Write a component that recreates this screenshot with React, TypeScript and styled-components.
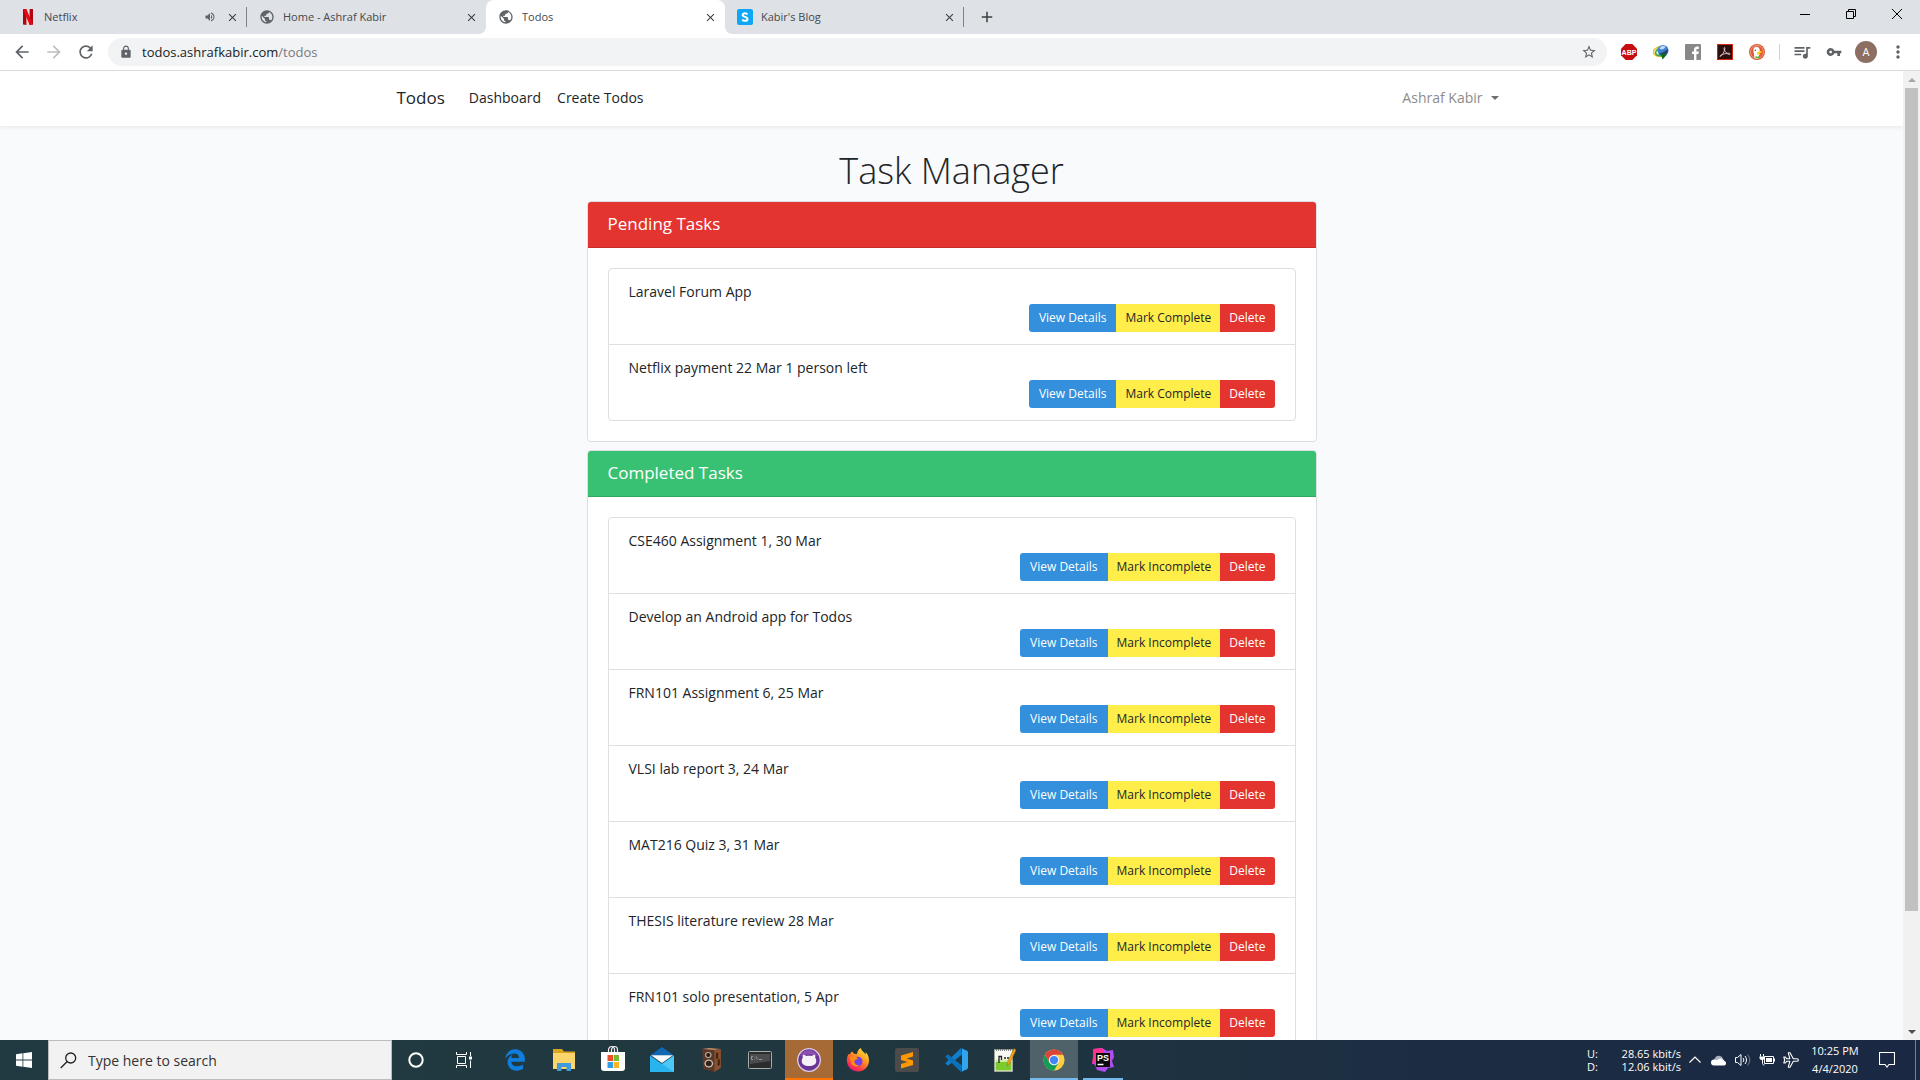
import React from "react";
import styled, { createGlobalStyle, css } from "styled-components";
import {
  MdArrowBack,
  MdArrowForward,
  MdClose,
  MdLock,
  MdMoreVert,
  MdPublic,
  MdQueueMusic,
  MdRefresh,
  MdStarBorder,
  MdVolumeUp,
  MdVpnKey,
  MdAdd,
} from "react-icons/md";

const FONT = '"Open Sans", "Noto Sans", sans-serif';

const GlobalStyle = createGlobalStyle`
  *, *::before, *::after { box-sizing: border-box; }
  body { margin: 0; overflow: hidden; font-family: ${FONT}; color: #212529; }
  button, input { font-family: inherit; margin: 0; }
  button { border: 0; padding: 0; background: transparent; color: inherit; cursor: pointer; }
`;

const Desktop = styled.div`
  display: flex;
  flex-direction: column;
  height: 100vh;
  overflow: hidden;
`;

/* ---------- Browser chrome ---------- */

const TabStrip = styled.header`
  display: flex;
  align-items: stretch;
  height: 34px;
  padding-left: 8px;
  background: #dee1e6;
`;

const Tabs = styled.div`
  display: flex;
  flex: 0 1 956px;
  min-width: 0;
`;

const Tab = styled.div<{ $active?: boolean }>`
  position: relative;
  display: flex;
  flex: 1 1 0;
  align-items: center;
  gap: 8px;
  min-width: 0;
  padding: 0 0 0 12px;
  font-size: 11px;
  line-height: 16px;
  color: #45494d;

  ${(p) =>
    p.$active &&
    css`
      background: #fff;
      border-radius: 8px 8px 0 0;
      &::before,
      &::after {
        content: "";
        position: absolute;
        bottom: 0;
        width: 8px;
        height: 8px;
      }
      &::before {
        right: 100%;
        background: radial-gradient(circle at 0 0, transparent 8px, #fff 8px);
      }
      &::after {
        left: 100%;
        background: radial-gradient(circle at 100% 0, transparent 8px, #fff 8px);
      }
    `}
`;

const TabTitle = styled.span`
  flex: 1;
  overflow: hidden;
  white-space: nowrap;
`;

const TabEnd = styled.span<{ $divider?: boolean }>`
  display: flex;
  align-items: center;
  justify-content: flex-start;
  width: 23px;
  height: 20px;
  border-right: 1px solid ${(p) => (p.$divider ? "#808387" : "transparent")};
`;

const IconButton = styled.button<{ $w?: number; $h?: number; $tone?: string }>`
  display: flex;
  flex: none;
  align-items: center;
  justify-content: center;
  width: ${(p) => p.$w ?? 16}px;
  height: ${(p) => p.$h ?? 28}px;
  color: ${(p) => p.$tone ?? "#5f6368"};
`;

const WindowControls = styled.div`
  display: flex;
  margin-left: auto;
  color: #000;
`;

const Toolbar = styled.div`
  display: flex;
  align-items: center;
  height: 37px;
  padding: 0 6px 0 8px;
  background: #fff;
  border-bottom: 1px solid #d8dadd;
`;

const NavButtons = styled.div`
  display: flex;
  gap: 4px;
  margin-right: 8px;
`;

const Omnibox = styled.div`
  display: flex;
  flex: 1;
  align-items: center;
  height: 28px;
  margin-right: 6px;
  padding: 0 10px 0 11px;
  border-radius: 14px;
  background: #f1f3f4;
  font-size: 13px;
  line-height: 20px;
  color: #777b80;
`;

const UrlInput = styled.input`
  field-sizing: content;
  margin-left: 9px;
  padding: 0;
  border: 0;
  outline: 0;
  background: transparent;
  font-size: 13px;
  line-height: 20px;
  color: #202124;
`;

const UrlPath = styled.span`
  flex: 1;
`;

const ToolbarDivider = styled.span`
  width: 1px;
  height: 16px;
  margin: 0 6px;
  background: #d0d3d6;
`;

const Avatar = styled.span`
  display: grid;
  place-items: center;
  width: 22px;
  height: 22px;
  border-radius: 50%;
  background: #8d6e63;
  color: #fff;
  font-size: 11px;
  line-height: 16px;
`;

/* ---------- Web page ---------- */

const Viewport = styled.div`
  display: flex;
  flex: 1;
  min-height: 0;
`;

const Page = styled.div`
  flex: 1;
  min-width: 0;
  overflow: hidden;
  background: #f8fafc;
  font-size: 14px;
  line-height: 23px;
`;

const Navbar = styled.nav`
  background: #fff;
  box-shadow: 0 2px 4px rgba(0, 0, 0, 0.06);
`;

const Container = styled.div`
  display: flex;
  align-items: center;
  max-width: 1140px;
  min-height: 55px;
  margin: 0 auto;
  padding: 0 15px 2px;
`;

const Brand = styled.a`
  margin-right: 16px;
  font-size: 17px;
  color: #212529;
  text-decoration: none;
`;

const NavLink = styled.a`
  padding: 0 8px;
  color: #212529;
  text-decoration: none;
`;

const UserMenu = styled.button`
  display: flex;
  align-items: center;
  gap: 8px;
  margin-left: auto;
  padding: 0 8px;
  font-size: 14px;
  line-height: 23px;
  color: #8c8c8c;

  &::after {
    content: "";
    border: 4px solid transparent;
    border-top-color: #6f6f6f;
    border-bottom: 0;
  }
`;

const Main = styled.main`
  max-width: 760px;
  margin: 0 auto;
  padding: 24px 15px;
`;

const Title = styled.h1`
  margin: 0 0 9px;
  font-size: 36px;
  font-weight: 300;
  line-height: 42px;
  text-align: center;
`;

const Card = styled.section`
  margin-bottom: 8px;
  border: 1px solid #dcdfe1;
  border-radius: 4px;
  background: #fff;
`;

const CardHeader = styled.h2<{ $color: string }>`
  margin: 0;
  padding: 11px 20px 12px;
  border-bottom: 1px solid rgba(0, 0, 0, 0.13);
  border-radius: 3px 3px 0 0;
  background: ${(p) => p.$color};
  color: #fff;
  font-size: 17px;
  font-weight: 400;
  line-height: 22px;
`;

const TaskList = styled.ul`
  margin: 20px;
  padding: 0;
  border: 1px solid #dfdfdf;
  border-radius: 4px;
  list-style: none;
`;

const TaskItem = styled.li`
  padding: 11px 20px 12px;

  & + & {
    border-top: 1px solid #dfdfdf;
  }
`;

const ButtonGroup = styled.div`
  display: flex;
  justify-content: flex-end;
  margin-top: 1px;
`;

const ActionButton = styled.button<{ $bg: string; $fg?: string }>`
  height: 28px;
  padding: 0 9px;
  background: ${(p) => p.$bg};
  color: ${(p) => p.$fg ?? "#fff"};
  font-size: 12px;
  line-height: 20px;

  &:first-child {
    padding: 0 10px;
    border-radius: 3px 0 0 3px;
  }
  &:last-child {
    border-radius: 0 3px 3px 0;
  }
`;

const Scrollbar = styled.div`
  display: flex;
  flex-direction: column;
  flex: none;
  width: 17px;
  background: #f1f1f1;
`;

const ScrollArrow = styled.button<{ $down?: boolean }>`
  display: grid;
  place-items: center;
  height: 17px;

  &::before {
    content: "";
    border: 4px solid transparent;
    ${(p) =>
      p.$down
        ? "border-top-color: #505050; border-bottom: 0;"
        : "border-bottom-color: #a3a3a3; border-top: 0;"}
  }
`;

const ScrollTrack = styled.div`
  flex: 1;
  padding: 0 2px;
`;

const ScrollThumb = styled.div`
  height: 88%;
  background: #c1c1c1;
`;

/* ---------- Taskbar ---------- */

const Taskbar = styled.footer`
  display: flex;
  flex: none;
  height: 40px;
  background: linear-gradient(90deg, #213a42 0%, #20373f 45%, #1c2d42 75%, #1a2843 100%);
  color: #fff;
`;

const TaskButton = styled.button<{ $state?: "alert" | "active" | "open" }>`
  display: flex;
  flex: none;
  align-items: center;
  justify-content: center;
  width: 48px;
  height: 40px;
  ${(p) =>
    p.$state === "alert" && "background: #a66a37; box-shadow: inset 0 -2px #ff7300;"}
  ${(p) =>
    p.$state === "active" && "background: #4f6169; box-shadow: inset 0 -2px #76b9ed;"}
  ${(p) =>
    p.$state === "open" &&
    "background: linear-gradient(#76b9ed, #76b9ed) center bottom / 40px 2px no-repeat;"}
`;

const SearchBox = styled.label`
  display: flex;
  align-items: center;
  gap: 11px;
  width: 344px;
  padding-left: 11px;
  border: 1px solid #b9bdbf;
  background: #f2f2f2;
`;

const SearchInput = styled.input`
  flex: 1;
  min-width: 0;
  padding: 2px 0 0;
  border: 0;
  outline: 0;
  background: transparent;
  font-size: 14px;
  line-height: 20px;

  &::placeholder {
    color: #333;
    opacity: 1;
  }
`;

const AppRow = styled.div`
  display: flex;
  gap: 1px;
  margin-left: 3px;
`;

const Tray = styled.div`
  display: flex;
  align-items: center;
  margin-left: auto;
`;

const NetSpeed = styled.dl`
  display: grid;
  grid-template-columns: auto auto;
  justify-content: space-between;
  width: 94px;
  margin: 0 2px 0 0;
  font-size: 11px;
  line-height: 13px;

  dd {
    margin: 0;
    text-align: right;
  }
`;

const TrayButton = styled.button<{ $w: number }>`
  display: flex;
  align-items: center;
  justify-content: center;
  width: ${(p) => p.$w}px;
  height: 40px;
`;

const Clock = styled.time`
  width: 64px;
  text-align: center;
  font-size: 11px;
  line-height: 18px;
`;

const ShowDesktop = styled.button`
  width: 5px;
  height: 40px;
  margin-left: 8px;
  border-left: 1px solid #77808d;
`;

/* ---------- Drawings ---------- */

const NetflixIcon = () => (
  <svg width="16" height="16" viewBox="0 0 16 16">
    <path d="M3 0h3.4v16L3 15.6z" fill="#b1060f" />
    <path d="M9.6 0H13v15.6L9.6 16z" fill="#b1060f" />
    <path d="M3 0h3.4L13 15.6 9.6 16z" fill="#e50914" />
  </svg>
);

const BlogIcon = () => (
  <svg width="16" height="16" viewBox="0 0 16 16">
    <rect width="16" height="16" rx="2" fill="#0fa7f5" />
    <path
      d="M10.4 5.4C9.9 4.6 9 4.2 8 4.2c-1.400 0-2.400.7-2.400 1.800 0 2.500 4.900 1.200 4.900 3.900 0 1.200-1.100 1.900-2.500 1.900-1.200 0-2.200-.5-2.700-1.400"
      fill="none"
      stroke="#fff"
      strokeWidth="2"
    />
  </svg>
);

const MinimizeIcon = () => (
  <svg width="10" height="10" viewBox="0 0 10 10"><path d="M0 5.500h10" stroke="#000" /></svg>
);
const RestoreIcon = () => (
  <svg width="10" height="10" viewBox="0 0 10 10" fill="none" stroke="#000">
    <path d="M.5 2.500h7v7h-7zM2.500 2.500v-2h7v7h-2" />
  </svg>
);
const CloseWindowIcon = () => (
  <svg width="10" height="10" viewBox="0 0 10 10"><path d="M0 0l10 10M10 0L0 10" stroke="#000" /></svg>
);

const AbpIcon = () => (
  <svg width="16" height="16" viewBox="0 0 16 16">
    <path d="M4.700 0h6.600L16 4.700v6.600L11.300 16H4.700L0 11.300V4.700z" fill="#c70d12" />
    <text x="8" y="10.500" textAnchor="middle" fontFamily="Liberation Sans, sans-serif" fontWeight="700" fontSize="7" fill="#fff">ABP</text>
  </svg>
);

const IdmIcon = () => (
  <svg width="16" height="16" viewBox="0 0 16 16">
    <path d="M7 2.500C2.500 3.500-.5 6.500.8 9.500 2 12 6 13 9 12" fill="none" stroke="#e2c52b" strokeWidth="1.600" />
    <path d="M6 4.500C3 6 2 8.500 3 10c1 1.500 4 2.200 6 1.500" fill="none" stroke="#3ea83c" strokeWidth="1.600" />
    <circle cx="10" cy="6.500" r="5.500" fill="#3f7fd0" />
    <path d="M6.500 4.500c1.500-2.800 4-3.300 6-1.800-1 2.300-4 3.800-6 1.800z" fill="#b9dcf5" />
    <path d="M5.500 10c3-.5 6-2.500 9.300-5l.2 3-4 4z" fill="#24466b" />
    <path d="M7.500 9l6.500 1.500-4.500 5z" fill="#0c6a16" />
  </svg>
);

const FacebookIcon = () => (
  <svg width="16" height="16" viewBox="0 0 16 16">
    <rect width="16" height="16" rx="1" fill="#888" />
    <path d="M9 16v-6H7V7.600h2V6c0-2.200 1.200-3.400 3.200-3.400h1.600v2.300h-1.200c-1 0-1.200.5-1.200 1.300v1.400h2.400L13.500 10h-2.100v6z" fill="#fff" />
  </svg>
);

const AdobeIcon = () => (
  <svg width="16" height="16" viewBox="0 0 16 16">
    <rect x=".5" y=".5" width="15" height="15" fill="#2d0f10" stroke="#d9230f" />
    <path
      d="M3 12.500c2-.8 4.300-4.500 4.900-8 .1-1.500-1.300-1.200-.9.300.8 3 3 5.300 5.200 5.700 1.200.1 1.200-1.200-.2-1.300-2.500-.2-5.500.7-8.300 2.200-.8.500-1 1-.7 1.100z"
      fill="none"
      stroke="#e8dede"
      strokeWidth=".8"
    />
  </svg>
);

const DuckIcon = () => (
  <svg width="16" height="16" viewBox="0 0 16 16">
    <circle cx="8" cy="8" r="8" fill="#de5833" />
    <circle cx="8" cy="8" r="6.500" fill="none" stroke="#f3b7a3" strokeWidth=".7" />
    <path d="M5.500 14L4.300 6.200c0-2.500 1.700-3.900 3.700-3.500 2 .4 3 2 2.800 4.300L9.500 14.300c-1.300.5-2.800.3-4-.3z" fill="#fff" />
    <circle cx="6.400" cy="6.200" r=".8" fill="#2d4f8e" />
    <path d="M8.500 8c2-.9 4.500-1 4.700-.3.100.8-2.200 1.500-4 1.900 1.500.3 2.600.5 2.300 1-.6.8-3.500.2-3.500-1z" fill="#fdd20a" />
    <path d="M6.500 12l2 .8 2-.8v2.600l-2-.6-2 .8z" fill="#4cba3c" />
  </svg>
);

const WindowsIcon = () => (
  <svg width="16" height="16" viewBox="0 0 16 16" fill="#fff">
    <path d="M0 2.200L6.500 1.300v6.300H0zM7.300 1.200L16 0v7.600H7.300zM0 8.400h6.500v6.300L0 13.800zM7.300 8.400H16V16l-8.700-1.200z" />
  </svg>
);

const SearchIcon = () => (
  <svg width="17" height="17" viewBox="0 0 17 17" fill="none" stroke="#222" strokeWidth="1.300">
    <circle cx="10.700" cy="6" r="5" />
    <path d="M7 9.700L.7 16" />
  </svg>
);

const CortanaIcon = () => (
  <svg width="16" height="16" viewBox="0 0 16 16"><circle cx="8" cy="8" r="6.700" fill="none" stroke="#fff" strokeWidth="2" /></svg>
);

const TaskViewIcon = () => (
  <svg width="16" height="16" viewBox="0 0 16 16" fill="none" stroke="#fff">
    <path d="M.5 0v2.500h10V0M.5 16v-2.500h10V16M1.500 5v6.500h8V4.500h-8zM14.500 0v4M14.500 8.500V16" />
    <path d="M13 4.500h3v3h-3z" fill="#fff" stroke="none" />
  </svg>
);

const EdgeIcon = () => (
  <svg width="22" height="22" viewBox="0 0 512 512" fill="#0f7ddb">
    <path d="M25.710 228.160l.350-.480c0 .160 0 .320-.070.480zm460.580 15.510c0-44-7.760-84.460-28.810-122.400C416.500 47.880 343.910 8 258.890 8 119 7.720 40.620 113.210 26.060 227.680c42.420-61.310 117.070-121.380 220.370-125 0 0 109.670 0 99.420 105H170c6.370-37.390 18.550-59 34.340-78.930-75.050 34.900-121.850 96.100-120.750 188.320.830 71.450 50.130 144.840 120.750 172 83.350 31.840 192.770 7.200 240.130-21.330V363.310C363.600 419.800 173.600 424.230 172.210 295.740H486.290z" />
  </svg>
);

const ExplorerIcon = () => (
  <svg width="22" height="22" viewBox="0 0 22 22">
    <path d="M0 0h9l2 2.500h11V20H0z" fill="#d9a520" />
    <path d="M0 4h22v16H0z" fill="#fbd56b" />
    <path d="M4 22v-8h14v8h-4.500v-4h-5v4z" fill="#3f9bdc" />
  </svg>
);

const StoreIcon = () => (
  <svg width="24" height="30" viewBox="0 0 24 30">
    <path d="M7.500 9V5a3 3.500 0 0 1 6 0v4M10.500 9V5a3 3.500 0 0 1 6 0v4" fill="none" stroke="#eee" strokeWidth="1.200" />
    <path d="M0 7h24v16a3 3 0 0 1-3 3H3a3 3 0 0 1-3-3z" fill="#fff" />
    <path d="M6.500 10H12v6H6.500z" fill="#e8502a" />
    <path d="M12.700 10H18v6h-5.300z" fill="#7fb92d" />
    <path d="M6.500 17H12v6H6.500z" fill="#2f9fe6" />
    <path d="M12.700 17H18v6h-5.300z" fill="#f8b520" />
  </svg>
);

const MailIcon = () => (
  <svg width="24" height="26" viewBox="0 0 24 26">
    <path d="M0 8.500L12 0l12 8.500z" fill="#1068b4" />
    <path d="M0 8.500L12 17l12-8.500V25H0z" fill="#29b3ef" />
    <path d="M24 8.500V25L8.500 14.500 12 17z" fill="#4cc8f7" />
    <path d="M1 8.300h22L12 16z" fill="#f4f9fd" />
  </svg>
);

const SpeakerAppIcon = () => (
  <svg width="22" height="24" viewBox="0 0 20 24" preserveAspectRatio="none">
    <path d="M2 1l11 1v22L3 21z" fill="#5a3826" />
    <path d="M2 1l6-1 11 1-6 1z" fill="#c98d63" />
    <path d="M13 2l6-1v19l-6 4z" fill="#8a5030" />
    <path d="M14.500 5l2-.5v6l-2 .5zM16 12l2-1v6l-2 1z" fill="#46240f" />
    <circle cx="7.500" cy="7" r="3" fill="#b8aaa0" />
    <circle cx="7.500" cy="7" r="1.900" fill="#2a1a12" />
    <circle cx="8" cy="15.500" r="4" fill="#c8bcb3" />
    <circle cx="8" cy="15.500" r="2.700" fill="#33221a" />
  </svg>
);

const TerminalIcon = () => (
  <svg width="24" height="18" viewBox="0 0 24 18">
    <rect x=".5" y=".5" width="23" height="17" rx="1" fill="#2a2c2d" stroke="#a9acad" />
    <path d="M2 3h20v7L2 13z" fill="#4a4c4d" />
    <path d="M5 5.500H3.500v3H5M6.500 6v.5M6.500 8v.5M8 5.500l1.500 3M11 8.500h3" fill="none" stroke="#aaa" strokeWidth=".8" />
  </svg>
);

const GitHubDesktopIcon = () => (
  <svg width="24" height="24" viewBox="0 0 24 24">
    <circle cx="12" cy="12" r="11.300" fill="#6a3593" stroke="#dccde8" strokeWidth="1.300" />
    <path d="M3 8a10 10 0 0 1 18 0c-5-2-13-2-18 0z" fill="#8a50b2" />
    <path
      d="M6 6.700c1.300 0 2.500.6 3.300 1.300 1.700-.4 3.700-.4 5.400 0 .8-.7 2-1.300 3.300-1.300.5 1.200.4 2.200.2 3 .7.8 1.100 1.800 1.100 3 0 3.800-2.900 5.200-7.300 5.200s-7.300-1.400-7.300-5.200c0-1.200.4-2.200 1.100-3-.2-.8-.3-1.800.2-3z"
      fill="#f5f1f7"
    />
  </svg>
);

const FirefoxIcon = () => (
  <svg width="24" height="24" viewBox="0 0 24 24">
    <defs>
      <linearGradient id="ffBody" x1=".85" y1="0" x2=".2" y2="1">
        <stop offset="0" stopColor="#fff14a" />
        <stop offset=".4" stopColor="#ff9a1f" />
        <stop offset=".75" stopColor="#ff3b47" />
        <stop offset="1" stopColor="#e3138a" />
      </linearGradient>
    </defs>
    <path d="M2.500 6C1 9 .5 11 1 14c1 6 5.500 9.500 11 9.500 6.500 0 11-5 11-11 0-4-1.500-6.500-3.500-8.500.2 1.200.3 2 .2 2.700C18.500 4 15 3 15 0c-2.500 1.200-3.800 3.600-4 6C8.500 6 7 5.500 6.500 3.500 5 4 4.200 5 4 6.500c-.6-.2-1-.3-1.500-.5z" fill="url(#ffBody)" />
    <circle cx="11.700" cy="13.500" r="4.800" fill="#7542e5" />
    <path d="M4 9c3-1.500 6-.5 8 1.500-1 1.200-3 .8-3.500 2.500C8 15 10 17.500 13 17c-2 2.500-6.500 2-8-2-.6-2-.8-4-1-6z" fill="#ff8a16" />
  </svg>
);

const SublimeIcon = () => (
  <svg width="24" height="24" viewBox="0 0 24 24">
    <rect width="24" height="24" rx="2" fill="#4b4b4b" />
    <path d="M18 4v4.500L11.500 10.500 18 12.500V17L6 20.500V16l6.500-2L6 12V7.500z" fill="#ff9800" />
  </svg>
);

const CodeIcon = () => (
  <svg width="24" height="24" viewBox="0 0 24 24">
    <path d="M17 0L2 14.500c-.6.600-.6 1 0 1.500l1.300 1.200c.4.300.9.300 1.300 0L18 6.500z" fill="#0f7fc9" />
    <path d="M17 24L2 9.500C1.400 8.900 1.400 8.500 2 8l1.300-1.200c.4-.3.900-.3 1.300 0L18 17.500z" fill="#0d71b8" />
    <path d="M17 0l6 2.700c.6.300 1 .9 1 1.500v15.600c0 .6-.4 1.200-1 1.500L17 24c.6-.5 1-1 1-2V2c0-1-.4-1.500-1-2z" fill="#2ea5ee" />
  </svg>
);

const NotepadIcon = () => (
  <svg width="22" height="24" viewBox="0 0 22 24">
    <path d="M.5 1.500h18v22H.5z" fill="#f8faf3" stroke="#9fa59b" />
    <path d="M1.500 14h16v8.500h-16z" fill="#7ccb2e" />
    <path d="M1.500 11.500h16V14h-16z" fill="#cdeaa6" />
    <path d="M2 2h16" stroke="#666" strokeWidth="1.500" strokeDasharray="1 1" />
    <path d="M5 15V8.500h2.500V12M10 10h2M13 10h2" fill="none" stroke="#222" strokeWidth="1.300" />
    <path d="M20 .5l2 1.500-6.500 14-2.500 2 .3-3.500z" fill="#f2a31c" stroke="#a0620b" strokeWidth=".5" />
  </svg>
);

const ChromeIcon = () => (
  <svg width="22" height="22" viewBox="0 0 48 48">
    <circle cx="24" cy="24" r="23" fill="#ffcd40" />
    <path d="M4.100 12.500A23 23 0 0 1 43.900 12.500H24L14 29.750z" fill="#db4437" />
    <path d="M4.100 12.500L14 29.750 24 35.500l9.960-5.750L24 47A23 23 0 0 1 4.100 12.500z" fill="#0f9d58" />
    <circle cx="24" cy="24" r="11.500" fill="#f1f1f1" />
    <circle cx="24" cy="24" r="9" fill="#4285f4" />
  </svg>
);

const PhpStormIcon = () => (
  <svg width="24" height="24" viewBox="0 0 24 24">
    <path d="M2 1l9-1 5 3 6-1 1 7-2 4 2 6-6 1-3 4-8-2-2-5-3-2 2-5z" fill="#b14df0" />
    <path d="M2 1l9-1 2 4-7 9-5 3 1-7z" fill="#ff318c" />
    <path d="M5 5h14v14H5z" fill="#0a0a0a" />
    <path d="M6.500 16.500h6" stroke="#fff" strokeWidth="1.500" />
    <text x="12" y="13" textAnchor="middle" fontFamily="Liberation Sans, sans-serif" fontWeight="700" fontSize="9" fill="#fff">PS</text>
  </svg>
);

const ChevronUpIcon = () => (
  <svg width="12" height="8" viewBox="0 0 12 8"><path d="M.5 6.500L6 1l5.500 5.500" fill="none" stroke="#fff" strokeWidth="1.200" /></svg>
);
const CloudIcon = () => (
  <svg width="16" height="11" viewBox="0 0 16 11">
    <path d="M3.500 4A4.500 4.500 0 0 1 12 3.500L6 9 2 7z" fill="#a9b0ba" />
    <path d="M3 10.500a3 3 0 0 1 0-6c1 0 2 .3 3 .8A4.500 4.500 0 0 1 13.500 6a2.400 2.400 0 0 1 0 4.500z" fill="#fff" />
  </svg>
);
const SpeakerIcon = () => (
  <svg width="16" height="14" viewBox="0 0 16 14" fill="none" stroke="#fff">
    <path d="M.5 4.500h2l3.500-3v11l-3.500-3h-2zM8 5c1 1.200 1 2.800 0 4M10 3c2 2.500 2 5.500 0 8" />
    <path d="M12.500 1.500c3 3.500 3 7.500 0 11" stroke="#7a8494" />
  </svg>
);
const BatteryIcon = () => (
  <svg width="16" height="12" viewBox="0 0 16 12" fill="none" stroke="#fff">
    <path d="M5.500 2.500h9v7h-9zM15.500 4.500v3M3.500 6v3.500c0 1 1 1.500 2 1.500M1.500 0v2.500M4.500 0v2.500" />
    <path d="M7 4h6v4H7zM.5 2.500h5v2L4 6H2L.5 4.500z" fill="#fff" stroke="none" />
  </svg>
);
const PlaneIcon = () => (
  <svg width="16" height="16" viewBox="0 0 16 16" fill="none" stroke="#fff" strokeWidth="1.100" strokeLinejoin="round">
    <path d="M15.400 8c0-.8-.6-1.300-1.500-1.300h-3.600L7 .8H5.300l1.500 5.900H3.700L2.300 5H.8l.9 3-.9 3h1.500l1.400-1.700h3.100l-1.500 5.900H7l3.300-5.900h3.600c.9 0 1.500-.5 1.500-1.300z" />
  </svg>
);
const ActionCenterIcon = () => (
  <svg width="16" height="16" viewBox="0 0 16 16" fill="none" stroke="#fff" strokeWidth="1.100">
    <path d="M.5.500h15v12h-5.500L8 15l-2-2.500H.5z" />
  </svg>
);

/* ---------- Data ---------- */

const tabs = [
  { title: "Netflix", icon: <NetflixIcon />, audio: true, divider: true },
  { title: "Home - Ashraf Kabir", icon: <MdPublic size={16} color="#5f6368" /> },
  { title: "Todos", icon: <MdPublic size={16} color="#5f6368" />, active: true },
  { title: "Kabir's Blog", icon: <BlogIcon />, divider: true },
];

const extensions = [
  { name: "Adblock Plus", icon: <AbpIcon /> },
  { name: "Download Manager", icon: <IdmIcon /> },
  { name: "Facebook", icon: <FacebookIcon /> },
  { name: "Adobe Acrobat", icon: <AdobeIcon /> },
  { name: "DuckDuckGo", icon: <DuckIcon /> },
];

const pending = ["Laravel Forum App", "Netflix payment 22 Mar 1 person left"];

const completed = [
  "CSE460 Assignment 1, 30 Mar",
  "Develop an Android app for Todos",
  "FRN101 Assignment 6, 25 Mar",
  "VLSI lab report 3, 24 Mar",
  "MAT216 Quiz 3, 31 Mar",
  "THESIS literature review 28 Mar",
  "FRN101 solo presentation, 5 Apr",
];

const apps: { name: string; icon: React.ReactNode; state?: "alert" | "active" | "open" }[] = [
  { name: "Edge", icon: <EdgeIcon /> },
  { name: "File Explorer", icon: <ExplorerIcon /> },
  { name: "Store", icon: <StoreIcon /> },
  { name: "Mail", icon: <MailIcon /> },
  { name: "Audio", icon: <SpeakerAppIcon /> },
  { name: "Command Prompt", icon: <TerminalIcon /> },
  { name: "GitHub Desktop", icon: <GitHubDesktopIcon />, state: "alert" },
  { name: "Firefox", icon: <FirefoxIcon /> },
  { name: "Sublime Text", icon: <SublimeIcon /> },
  { name: "Code", icon: <CodeIcon /> },
  { name: "Notepad++", icon: <NotepadIcon /> },
  { name: "Chrome", icon: <ChromeIcon />, state: "active" },
  { name: "PhpStorm", icon: <PhpStormIcon />, state: "open" },
];

function TaskCard({ title, color, tasks, toggle }: { title: string; color: string; tasks: string[]; toggle: string }) {
  return (
    <Card>
      <CardHeader $color={color}>{title}</CardHeader>
      <TaskList>
        {tasks.map((task) => (
          <TaskItem key={task}>
            {task}
            <ButtonGroup>
              <ActionButton $bg="#3490dc">View Details</ActionButton>
              <ActionButton $bg="#ffed4a" $fg="#212529">{toggle}</ActionButton>
              <ActionButton $bg="#e3342f">Delete</ActionButton>
            </ButtonGroup>
          </TaskItem>
        ))}
      </TaskList>
    </Card>
  );
}

export default function App() {
  return (
    <Desktop>
      <GlobalStyle />
      <TabStrip>
        <Tabs role="tablist">
          {tabs.map((tab) => (
            <Tab key={tab.title} role="tab" aria-selected={!!tab.active} $active={tab.active}>
              {tab.icon}
              <TabTitle>{tab.title}</TabTitle>
              {tab.audio && <MdVolumeUp size={12} color="#5f6368" />}
              <TabEnd $divider={tab.divider}>
                <IconButton aria-label="Close tab" $tone="#3c4043"><MdClose size={13} /></IconButton>
              </TabEnd>
            </Tab>
          ))}
        </Tabs>
        <IconButton aria-label="New tab" $w={46} $h={34} $tone="#3c4043"><MdAdd size={18} /></IconButton>
        <WindowControls>
          <IconButton aria-label="Minimize" $w={46}><MinimizeIcon /></IconButton>
          <IconButton aria-label="Restore" $w={46}><RestoreIcon /></IconButton>
          <IconButton aria-label="Close" $w={46}><CloseWindowIcon /></IconButton>
        </WindowControls>
      </TabStrip>

      <Toolbar>
        <NavButtons>
          <IconButton aria-label="Back" $w={28}><MdArrowBack size={20} /></IconButton>
          <IconButton aria-label="Forward" $w={28} $tone="#bcbec0"><MdArrowForward size={20} /></IconButton>
          <IconButton aria-label="Reload" $w={28}><MdRefresh size={20} /></IconButton>
        </NavButtons>
        <Omnibox>
          <MdLock size={14} color="#5f6368" />
          <UrlInput aria-label="Address" size={18} defaultValue="todos.ashrafkabir.com" />
          <UrlPath>/todos</UrlPath>
          <IconButton aria-label="Bookmark"><MdStarBorder size={18} /></IconButton>
        </Omnibox>
        {extensions.map((ext) => (
          <IconButton key={ext.name} aria-label={ext.name} $w={32}>{ext.icon}</IconButton>
        ))}
        <ToolbarDivider />
        <IconButton aria-label="Media" $w={32}><MdQueueMusic size={20} /></IconButton>
        <IconButton aria-label="Passwords" $w={32}><MdVpnKey size={16} /></IconButton>
        <IconButton aria-label="Profile" $w={32}><Avatar>A</Avatar></IconButton>
        <IconButton aria-label="Menu" $w={32}><MdMoreVert size={20} /></IconButton>
      </Toolbar>

      <Viewport>
        <Page>
          <Navbar>
            <Container>
              <Brand href="#">Todos</Brand>
              <NavLink href="#">Dashboard</NavLink>
              <NavLink href="#">Create Todos</NavLink>
              <UserMenu>Ashraf Kabir</UserMenu>
            </Container>
          </Navbar>
          <Main>
            <Title>Task Manager</Title>
            <TaskCard title="Pending Tasks" color="#e3342f" tasks={pending} toggle="Mark Complete" />
            <TaskCard title="Completed Tasks" color="#38c172" tasks={completed} toggle="Mark Incomplete" />
          </Main>
        </Page>
        <Scrollbar>
          <ScrollArrow aria-label="Scroll up" />
          <ScrollTrack><ScrollThumb /></ScrollTrack>
          <ScrollArrow aria-label="Scroll down" $down />
        </Scrollbar>
      </Viewport>

      <Taskbar>
        <TaskButton aria-label="Start"><WindowsIcon /></TaskButton>
        <SearchBox>
          <SearchIcon />
          <SearchInput aria-label="Search" placeholder="Type here to search" />
        </SearchBox>
        <TaskButton aria-label="Cortana"><CortanaIcon /></TaskButton>
        <TaskButton aria-label="Task view"><TaskViewIcon /></TaskButton>
        <AppRow>
          {apps.map((app) => (
            <TaskButton key={app.name} aria-label={app.name} $state={app.state}>{app.icon}</TaskButton>
          ))}
        </AppRow>
        <Tray>
          <NetSpeed>
            <dt>U:</dt><dd>28.65 kbit/s</dd>
            <dt>D:</dt><dd>12.06 kbit/s</dd>
          </NetSpeed>
          <TrayButton $w={24} aria-label="Hidden icons"><ChevronUpIcon /></TrayButton>
          <TrayButton $w={24} aria-label="OneDrive"><CloudIcon /></TrayButton>
          <TrayButton $w={24} aria-label="Volume"><SpeakerIcon /></TrayButton>
          <TrayButton $w={24} aria-label="Battery"><BatteryIcon /></TrayButton>
          <TrayButton $w={24} aria-label="Airplane mode"><PlaneIcon /></TrayButton>
          <Clock>10:25 PM<br />4/4/2020</Clock>
          <TrayButton $w={40} aria-label="Notifications"><ActionCenterIcon /></TrayButton>
          <ShowDesktop aria-label="Show desktop" />
        </Tray>
      </Taskbar>
    </Desktop>
  );
}
